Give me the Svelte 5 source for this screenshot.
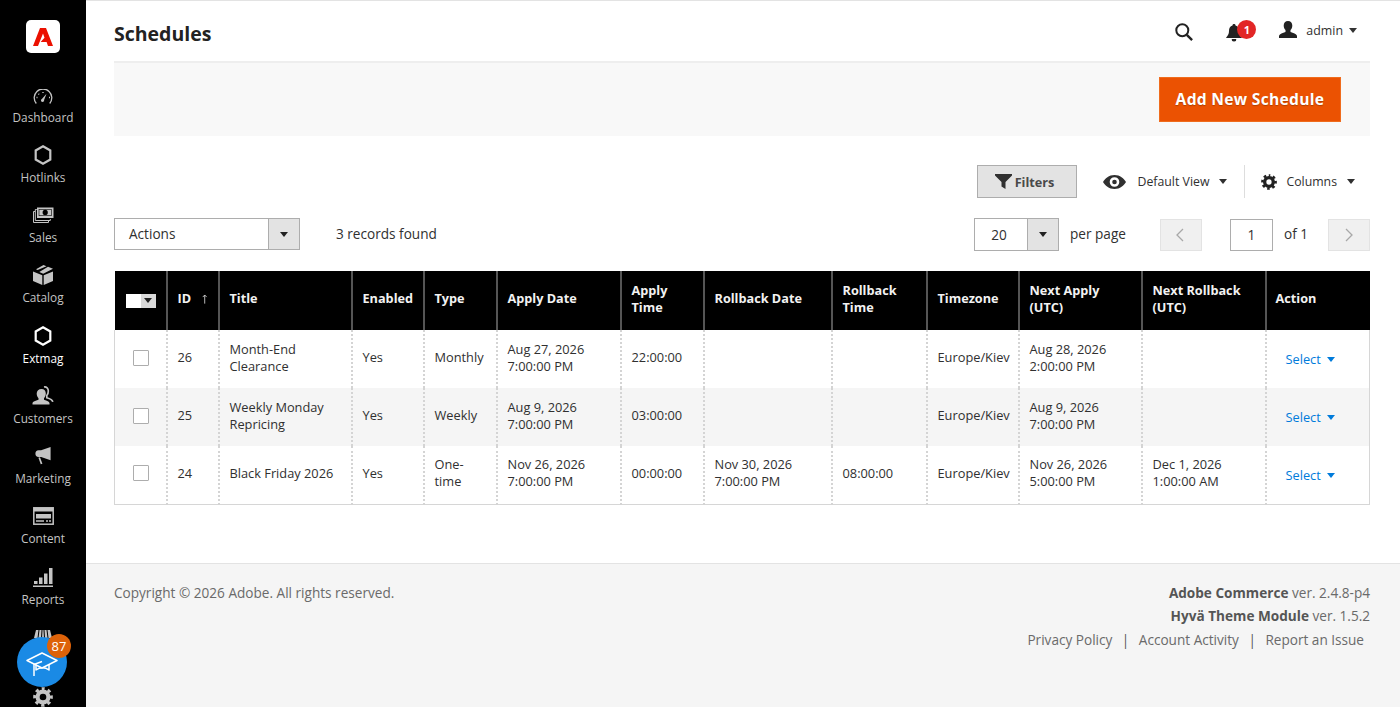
<script>
  const nav = [
    { label: 'Dashboard', icon: 'dash' },
    { label: 'Hotlinks', icon: 'hex' },
    { label: 'Sales', icon: 'sales' },
    { label: 'Catalog', icon: 'catalog' },
    { label: 'Extmag', icon: 'hex', active: true },
    { label: 'Customers', icon: 'customers' },
    { label: 'Marketing', icon: 'marketing' },
    { label: 'Content', icon: 'content' },
    { label: 'Reports', icon: 'reports' },
    { label: 'Stores', icon: 'stores' },
    { label: 'System', icon: 'gear' }
  ];
  const cols = [52, 52, 133, 72, 73, 124, 83, 128, 95, 92, 123, 124, 104];
  const heads = ['', 'ID', 'Title', 'Enabled', 'Type', 'Apply Date', 'Apply Time', 'Rollback Date', 'Rollback Time', 'Timezone', 'Next Apply (UTC)', 'Next Rollback (UTC)', 'Action'];
  const rows = [
    ['26', 'Month-End Clearance', 'Yes', 'Monthly', 'Aug 27, 2026 7:00:00 PM', '22:00:00', '', '', 'Europe/Kiev', 'Aug 28, 2026 2:00:00 PM', ''],
    ['25', 'Weekly Monday Repricing', 'Yes', 'Weekly', 'Aug 9, 2026 7:00:00 PM', '03:00:00', '', '', 'Europe/Kiev', 'Aug 9, 2026 7:00:00 PM', ''],
    ['24', 'Black Friday 2026', 'Yes', 'One-time', 'Nov 26, 2026 7:00:00 PM', '00:00:00', 'Nov 30, 2026 7:00:00 PM', '08:00:00', 'Europe/Kiev', 'Nov 26, 2026 5:00:00 PM', 'Dec 1, 2026 1:00:00 AM']
  ];
</script>

{#snippet gear(size)}
  <svg width={size} height={size} viewBox="0 0 24 24" aria-hidden="true"><g fill="none" stroke="currentColor"><circle cx="12" cy="12" r="6.500" stroke-width="5"/><circle cx="12" cy="12" r="9.800" stroke-width="4" stroke-dasharray="3.850 3.850" stroke-dashoffset="1.925" transform="rotate(-90 12 12)"/></g></svg>
{/snippet}

{#snippet caret(color)}
  <svg class="caret" width="8" height="5" viewBox="0 0 8 5" aria-hidden="true"><path fill={color} d="M0 0h8L4 5z"/></svg>
{/snippet}

<div class="page">
  <aside class="sidebar">
    <div class="logo">
      <svg width="20" height="18" viewBox="0 0 20 18" aria-hidden="true"><path fill="#eb1000" d="M7 0h6l7 18h-5l-1.400-4H7.600l3.900-4.300L10 5.500 5 18H0z"/></svg>
    </div>
    <nav class="nav">
      {#each nav as item}
        <div class="nav-item" class:active={item.active}>
          <div class="nav-icon">
            {#if item.icon === 'dash'}
              <svg class="dash" width="20" height="16" viewBox="0 0 20 16" aria-hidden="true"><path fill="none" stroke="currentColor" stroke-width="1.300" d="M3.300 14.500A8.800 8.800 0 1 1 16.700 14.500"/><path fill="currentColor" d="M13.500 4.800l-2.400 6.100a1.600 1.600 0 1 1-2.200-1z"/><path stroke="currentColor" stroke-width="1.400" d="M3.500 8.500h1M5.500 4.800l.6.6M10 3v1M16 8.500h1"/></svg>
            {:else if item.icon === 'hex'}
              <svg width="18" height="20" viewBox="0 0 18 20" aria-hidden="true"><path fill="none" stroke="currentColor" stroke-width="2.200" d="M9 1.300l7.300 4.200v9L9 18.700l-7.300-4.200v-9z"/></svg>
            {:else if item.icon === 'sales'}
              <svg width="22" height="16" viewBox="0 0 22 16" aria-hidden="true"><path fill="none" stroke="currentColor" stroke-width="1" d="M3 4.500H1.500v11h15V14M4.800 2.500H3.300v11h15V12"/><path fill="currentColor" fill-rule="evenodd" d="M5 .500h16.500V11H5zM13.200 2.800a2.600 2.600 0 1 0 0 5.200 2.600 2.600 0 0 0 0-5.200z"/><rect x="7" y="2.300" width="12.500" height="6.400" fill="none" stroke="#000" stroke-width=".6"/></svg>
            {:else if item.icon === 'catalog'}
              <svg width="20" height="20" viewBox="0 0 20 20" aria-hidden="true"><path fill="currentColor" d="M0 6.500l9.300 3.700V20L0 16zM20 6.500v9.500l-9.300 4v-9.800zM10.500 0l3 1.200L4.600 5 3 4.300zM15 1.800l5 2-9.800 4.900-3.900-1.600z"/></svg>
            {:else if item.icon === 'customers'}
              <svg width="23" height="20" viewBox="0 0 22 20" aria-hidden="true"><path fill="currentColor" d="M9 3c2.800 0 4.300 2 4.300 4.600 0 2-.8 3.600-1.800 4.600v1.600c3 .8 5.300 1.800 5.500 3.200v1.500H0v-1.500c.2-1.400 3-2.400 6-3.200v-1.600c-1-1-1.800-2.600-1.800-4.600C4.200 5 6.200 3 9 3z"/><path fill="none" stroke="currentColor" stroke-width="1.700" d="M11.500 1c2.600-.4 4.300 1.300 4.300 4 0 1.800-.5 3.500-1.500 4.500v2.300c3 .8 5.600 2 6 4"/></svg>
            {:else if item.icon === 'marketing'}
              <svg width="18" height="18" viewBox="0 0 18 19" aria-hidden="true"><path fill="currentColor" d="M17 0v14L7 10.500H4.500C2 10.500 1 9 1 7s1-3.500 3.500-3.500H7z"/><path fill="none" stroke="currentColor" stroke-width="1.800" d="M5 11l2.500 7"/></svg>
            {:else if item.icon === 'content'}
              <svg width="21" height="18" viewBox="0 0 21 18" aria-hidden="true"><rect x=".8" y=".8" width="19.400" height="16.400" fill="none" stroke="currentColor" stroke-width="1.500"/><rect x="1" y="1" width="19" height="3.500" fill="currentColor"/><rect x="3" y="7" width="15" height="4.500" fill="currentColor"/><path stroke="currentColor" stroke-width="1.500" d="M3 14h8M13 14h2M16 14h2"/></svg>
            {:else if item.icon === 'reports'}
              <svg width="20" height="20" viewBox="0 0 20 20" aria-hidden="true"><path fill="currentColor" d="M0 18.500h20V20H0zM1 14h3.500v3H1zM6 10.500h3.500V17H6zM11 6.500h3.500V17H11zM16 1h3.500v16H16z"/></svg>
            {:else if item.icon === 'stores'}
              <svg class="stores" width="20" height="20" viewBox="0 0 20 20" aria-hidden="true"><path fill="currentColor" d="M3 0h14l2 8H1z"/><path stroke="#000" stroke-width="1" d="M6 0L5 8M9 0L8.500 8M11 0l.5 8M14 0l1 8"/><path fill="currentColor" d="M2 9h16v11H2z"/></svg>
            {:else}
              {@render gear(20)}
            {/if}
          </div>
          <span>{item.label}</span>
        </div>
      {/each}
    </nav>
    <div class="help">
      <svg class="cap" width="32" height="25" viewBox="0 0 32 25" aria-hidden="true"><g fill="none" stroke="#fff" stroke-width="1.500" stroke-linejoin="round"><path d="M16 1L31 8.500 16 16 1 8.500z"/><path d="M10 12.500v5.500c2-1.500 4-2.200 6.500-2.200s4.500.7 6.500 2.200V12.500"/><path d="M16 9.500L8 12.500V24"/></g></svg>
      <span class="help-badge">87</span>
    </div>
  </aside>

  <div class="main">
    <header class="topbar">
      <h1>Schedules</h1>
      <div class="top-actions">
        <svg class="search" width="18" height="18" viewBox="0 0 18 18" aria-hidden="true"><circle cx="7.300" cy="7.300" r="6" fill="none" stroke="#222" stroke-width="2"/><path stroke="#222" stroke-width="2.400" d="M11.800 11.800l5.300 5.300"/></svg>
        <div class="bell">
          <svg width="16" height="18" viewBox="0 0 16 18" aria-hidden="true"><path fill="#222" d="M8 0c1 0 1.500.6 1.500 1.400C12 2.200 13 4 13 7c0 3 1 4.500 2.800 6.400V14H.2v-.6C2 11.500 3 10 3 7c0-3 1-4.800 3.500-5.600C6.500.6 7 0 8 0zM5.800 15h4.400A2.200 2.200 0 0 1 8 17.500 2.200 2.200 0 0 1 5.800 15z"/></svg>
          <span class="bell-badge">1</span>
        </div>
        <div class="user">
          <svg width="18" height="18" viewBox="0 0 18 18" aria-hidden="true"><path fill="#222" d="M9 0c2.700 0 4.300 2 4.300 4.600 0 2-.8 3.500-1.800 4.500v1.800c2.800.8 5.800 2 6.500 3.800V17H0v-2.300c.7-1.800 3.700-3 6.500-3.800V9.100c-1-1-1.800-2.500-1.800-4.500C4.700 2 6.300 0 9 0z"/></svg>
          <span>admin</span>
          {@render caret('#333')}
        </div>
      </div>
    </header>

    <div class="actionbar">
      <button class="primary">Add New Schedule</button>
    </div>

    <div class="tools">
      <button class="filters">
        <svg width="17" height="15" viewBox="0 0 17 15" aria-hidden="true"><path fill="#303030" d="M0 0h17v1.500L10.500 8v7l-4-2.500V8L0 1.500z"/></svg>
        Filters
      </button>
      <div class="tool">
        <svg class="eye" width="23" height="14" viewBox="0 0 23 14" aria-hidden="true"><path fill="#303030" fill-rule="evenodd" d="M11.500 0C17 0 21 3.500 23 7c-2 3.500-6 7-11.500 7S2 10.500 0 7C2 3.500 6 0 11.500 0zm0 2.200a4.800 4.800 0 1 0 0 9.600 4.800 4.800 0 0 0 0-9.600zM11.500 4.700a2.300 2.300 0 1 1 0 4.600 2.300 2.300 0 0 1 0-4.600z"/></svg>
        <span>Default View</span>
        {@render caret('#303030')}
      </div>
      <div class="tool sep">
        <span class="gear">{@render gear(16)}</span>
        <span>Columns</span>
        {@render caret('#303030')}
      </div>
    </div>

    <div class="pager-row">
      <div class="select actions-select">
        <span class="select-value">Actions</span>
        <span class="select-btn">{@render caret('#222')}</span>
      </div>
      <span class="records lift">3 records found</span>
      <div class="pager">
        <div class="select per-select">
          <span class="select-value">20</span>
          <span class="select-btn">{@render caret('#222')}</span>
        </div>
        <span class="per lift">per page</span>
        <span class="page-btn prev"><svg width="9" height="14" viewBox="0 0 9 14" aria-hidden="true"><path fill="none" stroke="#a8a8a8" stroke-width="1.300" d="M8 1L2 7l6 6"/></svg></span>
        <span class="page-input">1</span>
        <span class="of lift">of 1</span>
        <span class="page-btn"><svg width="9" height="14" viewBox="0 0 9 14" aria-hidden="true"><path fill="none" stroke="#a8a8a8" stroke-width="1.300" d="M1 1l6 6-6 6"/></svg></span>
      </div>
    </div>

    <table>
      <colgroup>
        {#each cols as w}<col style="width:{w}px" />{/each}
      </colgroup>
      <thead>
        <tr>
          {#each heads as h, i}
            <th>
              {#if i === 0}
                <span class="mass"><span class="mass-box"></span><span class="mass-btn">{@render caret('#222')}</span></span>
              {:else if i === 1}
                <span class="id-head">ID <svg width="7" height="12" viewBox="0 0 7 12" aria-hidden="true"><path fill="none" stroke="#d8d8d8" stroke-width="1.100" d="M3.500 12V1M1 3.500L3.500 .8 6 3.500"/></svg></span>
              {:else}
                {h}
              {/if}
            </th>
          {/each}
        </tr>
      </thead>
      <tbody>
        {#each rows as r, ri}
          <tr class:alt={ri === 1}>
            <td class="check"><span class="box"></span></td>
            {#each r as c}<td>{c}</td>{/each}
            <td class="sel"><span class="select-link">Select {@render caret('#007bdb')}</span></td>
          </tr>
        {/each}
      </tbody>
    </table>

    <footer class="footer">
      <span class="copy">Copyright © 2026 Adobe. All rights reserved.</span>
      <div class="foot-right">
        <div><b>Adobe Commerce</b> ver. 2.4.8-p4</div>
        <div><b>Hyvä Theme Module</b> ver. 1.5.2</div>
        <div class="links"><span>Privacy Policy</span><i>|</i><span>Account Activity</span><i>|</i><span>Report an Issue</span></div>
      </div>
    </footer>
  </div>
</div>

<style>
  :global(body) { margin: 0; background: #fff; overflow: hidden; }
  .page {
    display: flex; height: 707px; overflow: hidden;
    font-family: "Open Sans", "Liberation Sans", sans-serif; font-size: 13.600px; color: #303030;
  }
  .sidebar {
    position: relative; flex: 0 0 86px; width: 86px; background: #000; color: #c4c4c4;
    display: flex; flex-direction: column; align-items: center; overflow: hidden;
  }
  .logo {
    margin-top: 20px; width: 34px; height: 33px; background: #fff; border-radius: 5px;
    display: flex; align-items: center; justify-content: center; flex: none;
  }
  .nav { margin-top: 28.700px; width: 100%; flex: none; }
  .nav-item { height: 60.250px; display: flex; flex-direction: column; align-items: center; font-size: 11.800px; line-height: 17px; }
  .nav-item.active { color: #fff; }
  .nav-icon { height: 26px; display: flex; align-items: center; justify-content: center; margin-bottom: 1px; }
  .dash { position: relative; top: 2px; }
  .stores { position: relative; top: 3px; }
  .help {
    position: absolute; left: 17px; top: 637px; width: 50px; height: 50px; border-radius: 50%;
    background: #1a8ae5; display: flex; align-items: center; justify-content: center;
  }
  .cap { position: relative; top: 2px; }
  .help-badge {
    position: absolute; left: 30px; top: -3px; width: 24px; height: 24px; border-radius: 50%;
    background: #dd6209; color: #fff; font-size: 13px; line-height: 24px; text-align: center;
  }
  .main { flex: 1; min-width: 0; display: flex; flex-direction: column; border-top: 1px solid #e3e3e3; }
  .topbar { height: 60px; margin: 0 30px 0 28px; display: flex; align-items: center; justify-content: space-between; flex: none; }
  h1 { margin: 0; font-size: 19.500px; font-weight: 700; color: #222; position: relative; top: 2px; }
  .top-actions { display: flex; align-items: center; height: 100%; }
  .search { margin-right: 33px; position: relative; top: 1px; }
  .bell { position: relative; width: 16px; height: 18px; margin-right: 37px; top: 2px; }
  .bell-badge {
    position: absolute; left: 11px; top: -4px; width: 19px; height: 19px; border-radius: 50%;
    background: #e22626; color: #fff; font-size: 11px; font-weight: 700; line-height: 19px; text-align: center;
  }
  .user { display: flex; align-items: center; margin-right: 13px; font-size: 12.400px; position: relative; top: -1px; }
  .user span { margin: 0 6px 0 9px; }
  .caret { display: block; flex: none; }
  .actionbar {
    margin: 0 30px 0 28px; height: 73px; border-top: 2px solid #eee; background: #f8f8f8; flex: none;
    display: flex; justify-content: flex-end; align-items: flex-start; padding: 0 29px 0 0;
  }
  .primary {
    margin-top: 14px; width: 182px; height: 45px; border: 1px solid #ef6c1d; background: #eb5202; color: #fff;
    font: 700 15.600px "Open Sans", sans-serif; text-shadow: 0 1px 1px rgba(0,0,0,.25); letter-spacing: .3px; padding: 0 0 2px;
  }
  .tools { display: flex; justify-content: flex-end; align-items: center; margin: 29px 30px 0 28px; height: 33px; flex: none; }
  .filters {
    width: 100px; height: 33px; box-sizing: border-box; background: #e3e3e3; border: 1px solid #adadad;
    display: flex; align-items: center; justify-content: center; gap: 3px; padding: 0 4px 0 0;
    font: 700 12.700px "Open Sans", sans-serif; color: #4a4a4a;
  }
  .tool { display: flex; align-items: center; font-size: 12.300px; height: 33px; }
  .eye { margin: 0 12px 0 26px; }
  .tool .caret { margin-left: 10px; }
  .sep { border-left: 1px solid #ddd; margin-left: 17px; padding: 0 15px 0 16px; }
  .gear { display: block; height: 16px; margin-right: 9px; color: #222; }
  .pager-row { display: flex; align-items: flex-start; margin: 20px 30px 0 28px; height: 32px; flex: none; }
  .select { display: flex; height: 32px; box-sizing: border-box; border: 1px solid #adadad; background: #fff; }
  .select-value { flex: 1; display: flex; align-items: center; padding: 0 0 2px 14px; }
  .select-btn { width: 30px; background: #e3e3e3; border-left: 1px solid #adadad; display: flex; align-items: center; justify-content: center; }
  .actions-select { width: 186px; }
  .records { margin-left: 36px; }
  .lift { display: block; line-height: 32px; }
  .pager { margin-left: auto; display: flex; align-items: flex-start; }
  .per-select { width: 85px; height: 33px; }
  .per-select .select-value { justify-content: center; padding: 0 4px 0 0; }
  .per { margin-left: 11px; width: 90px; }
  .page-btn { width: 42px; height: 32px; margin-top: 1px; box-sizing: border-box; background: #f0f0f0; border: 1px solid #e3e3e3; display: flex; align-items: center; justify-content: center; }
  .prev { padding-right: 3px; }
  .page-input { margin: 1px 0 0 28px; width: 43px; height: 32px; padding-bottom: 2px; box-sizing: border-box; border: 1px solid #adadad; display: flex; align-items: center; justify-content: center; }
  .of { margin-left: 11px; width: 44px; }
  table { margin: 21px 30px 0 28px; width: 1255px; table-layout: fixed; border-collapse: collapse; flex: none; line-height: 17px; }
  th {
    height: 59px; padding: 0 10px 4px; background: #000; color: #f2f2f2; text-align: left; font-size: 12.700px; font-weight: 700;
    border-left: 2px solid #555; box-sizing: border-box;
  }
  th:first-child { border-left: 0; }
  th:last-child { padding-left: 9px; }
  .id-head { display: flex; align-items: center; gap: 11px; }
  .mass { display: flex; width: 30px; height: 14px; margin: 4px 0 0 1px; }
  .mass-box { width: 15px; background: #fff; }
  .mass-btn { flex: 1; background: #d9d9d9; display: flex; align-items: center; justify-content: center; }
  td { height: 58px; padding: 0 10px 3px; border-left: 2px dotted #d4d4d4; box-sizing: border-box; font-size: 12.800px; background: #fff; }
  td:first-child { border-left: 1px solid #d6d6d6; }
  td:last-child { border-right: 1px solid #d6d6d6; padding-left: 19px; }
  tbody tr:last-child td { border-bottom: 1px solid #d6d6d6; }
  tr.alt td { background: #f5f5f5; }
  .box { display: block; box-sizing: border-box; width: 16px; height: 16px; border: 1px solid #adadad; background: #fff; border-radius: 1px; margin-left: 8px; }
  .select-link { display: flex; align-items: center; gap: 6px; color: #007bdb; position: relative; top: 2px; }
  .footer {
    margin-top: 58px; flex: 1; background: #f5f5f5; border-top: 1px solid #e3e3e3; padding: 17px 30px 0 28px;
    display: flex; justify-content: space-between; align-items: flex-start; line-height: 23.500px; font-size: 13.600px; color: #6a6a6a;
  }
  .foot-right { text-align: right; }
  .foot-right b { color: #555; }
  .links { display: flex; justify-content: flex-end; padding-right: 6px; }
  .links i { font-style: normal; margin: 0 9.500px; color: #555; }
</style>
